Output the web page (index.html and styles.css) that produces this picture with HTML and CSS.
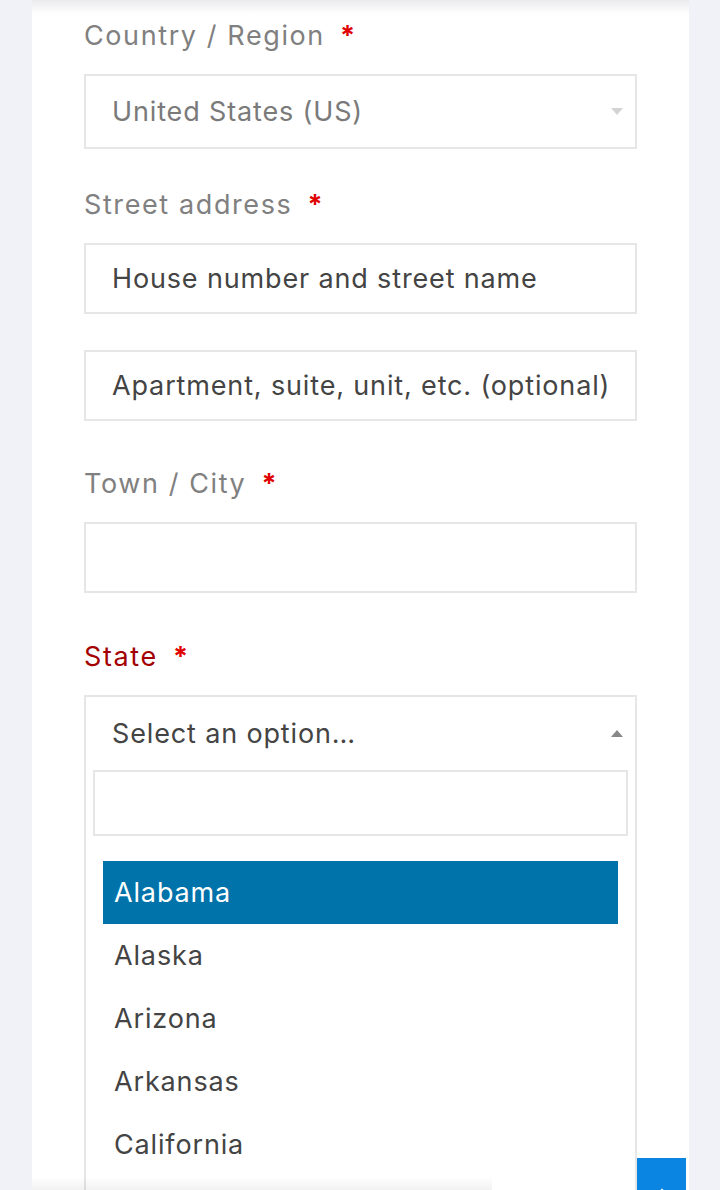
FILE: index.html
```html
<!DOCTYPE html>
<html lang="en">
  <head>
    <meta charset="UTF-8" />
    <meta name="viewport" content="width=device-width, initial-scale=1.0" />
    <title>Checkout</title>
    <link rel="stylesheet" href="styles.css">
  </head>
  <body>
    <div class="card">
      <div class="field field-country">
        <label class="field-label">Country / Region <span class="req">*</span></label>
        <div class="select-box disabled">
          <span class="select-text">United States (US)</span>
          <span class="arrow arrow-down"></span>
        </div>
      </div>

      <div class="field field-address">
        <label class="field-label">Street address <span class="req">*</span></label>
        <input class="text-input" type="text" placeholder="House number and street name" />
        <input class="text-input second" type="text" placeholder="Apartment, suite, unit, etc. (optional)" />
      </div>

      <div class="field field-town">
        <label class="field-label">Town / City <span class="req">*</span></label>
        <input class="text-input" type="text" />
      </div>

      <div class="field field-state">
        <label class="field-label invalid">State <span class="req">*</span></label>
        <div class="dropdown">
          <div class="dropdown-head">
            <span class="select-text">Select an option…</span>
            <span class="arrow arrow-up"></span>
          </div>
          <div class="dropdown-body">
            <input class="search-input" type="text" />
            <ul class="results">
              <li class="active">Alabama</li>
              <li>Alaska</li>
              <li>Arizona</li>
              <li>Arkansas</li>
              <li>California</li>
            </ul>
          </div>
        </div>
      </div>
    </div>

    <div class="bottom-shade"></div>
    <button class="to-top" aria-label="Back to top">
      <svg width="12" height="8" viewBox="0 0 12 8"><path d="M1 7 L6 2 L11 7" fill="none" stroke="#fff" stroke-width="2"/></svg>
    </button>
  </body>
</html>
```

FILE: styles.css
```css
* {
  box-sizing: border-box;
}
html,
body {
  height: 100%;
  overflow: hidden;
}
body {
  margin: 0;
  background-color: #f1f2f8;
  font-family: Inter, "Noto Sans", Arial, sans-serif;
  font-size: 27px;
  letter-spacing: 0.85px;
  color: #444;
}
.card {
  width: 657px;
  margin-left: 32px;
  min-height: 100%;
  padding: 16px 52px 0 52px;
  background: linear-gradient(#ebebee, #fff 14px);
}
.field-label {
  display: block;
  line-height: 39px;
  margin-bottom: 19px;
  color: #808080;
  font-weight: 400;
  letter-spacing: 1.6px;
}
.field-label.invalid {
  color: #a30000;
}
.req {
  color: #e00000;
  margin-left: 6px;
  font-weight: 700;
}
.field-country {
  margin-bottom: 36px;
}
.field-address {
  margin-bottom: 43px;
}
.field-town {
  margin-bottom: 44px;
}
.select-box {
  display: flex;
  align-items: center;
  justify-content: space-between;
  height: 75px;
  padding: 0 12px 0 26px;
  border: 2px solid #e6e6e6;
}
.select-box.disabled .select-text {
  color: #7a7a7a;
}
.arrow {
  width: 0;
  height: 0;
  border-left: 6px solid transparent;
  border-right: 6px solid transparent;
}
.arrow-down {
  border-top: 7px solid #d4d4d4;
}
.arrow-up {
  border-bottom: 7px solid #888;
}
.text-input {
  display: block;
  width: 100%;
  height: 71px;
  padding: 0 26px;
  border: 2px solid #e6e6e6;
  font: inherit;
  letter-spacing: inherit;
  color: #444;
  background: #fff;
  outline: none;
}
.text-input::placeholder {
  color: #444;
  opacity: 1;
}
.text-input.second {
  margin-top: 36px;
}
.dropdown {
  border: 2px solid #e6e6e6;
  border-bottom: none;
  height: 600px;
}
.dropdown-head {
  display: flex;
  align-items: center;
  justify-content: space-between;
  height: 73px;
  padding: 0 12px 0 26px;
}
.dropdown-body {
  padding: 0 7px;
}
.search-input {
  display: block;
  width: 100%;
  height: 66px;
  border: 2px solid #e6e6e6;
  font: inherit;
  outline: none;
}
.results {
  list-style: none;
  margin: 25px 0 0 0;
  padding: 0 10px;
}
.results li {
  height: 63px;
  line-height: 63px;
  padding-left: 11px;
  color: #444;
}
.results li.active {
  background-color: #0073aa;
  color: #fff;
}
.bottom-shade {
  position: fixed;
  left: 32px;
  bottom: 0;
  width: 460px;
  height: 14px;
  background: linear-gradient(rgba(0, 0, 0, 0), rgba(0, 0, 0, 0.05));
}
.to-top {
  position: absolute;
  left: 637px;
  top: 1158px;
  width: 49px;
  height: 44px;
  border: none;
  background-color: #0a86e2;
  padding: 0 0 6px 0;
  display: flex;
  justify-content: center;
  align-items: flex-end;
}
```
